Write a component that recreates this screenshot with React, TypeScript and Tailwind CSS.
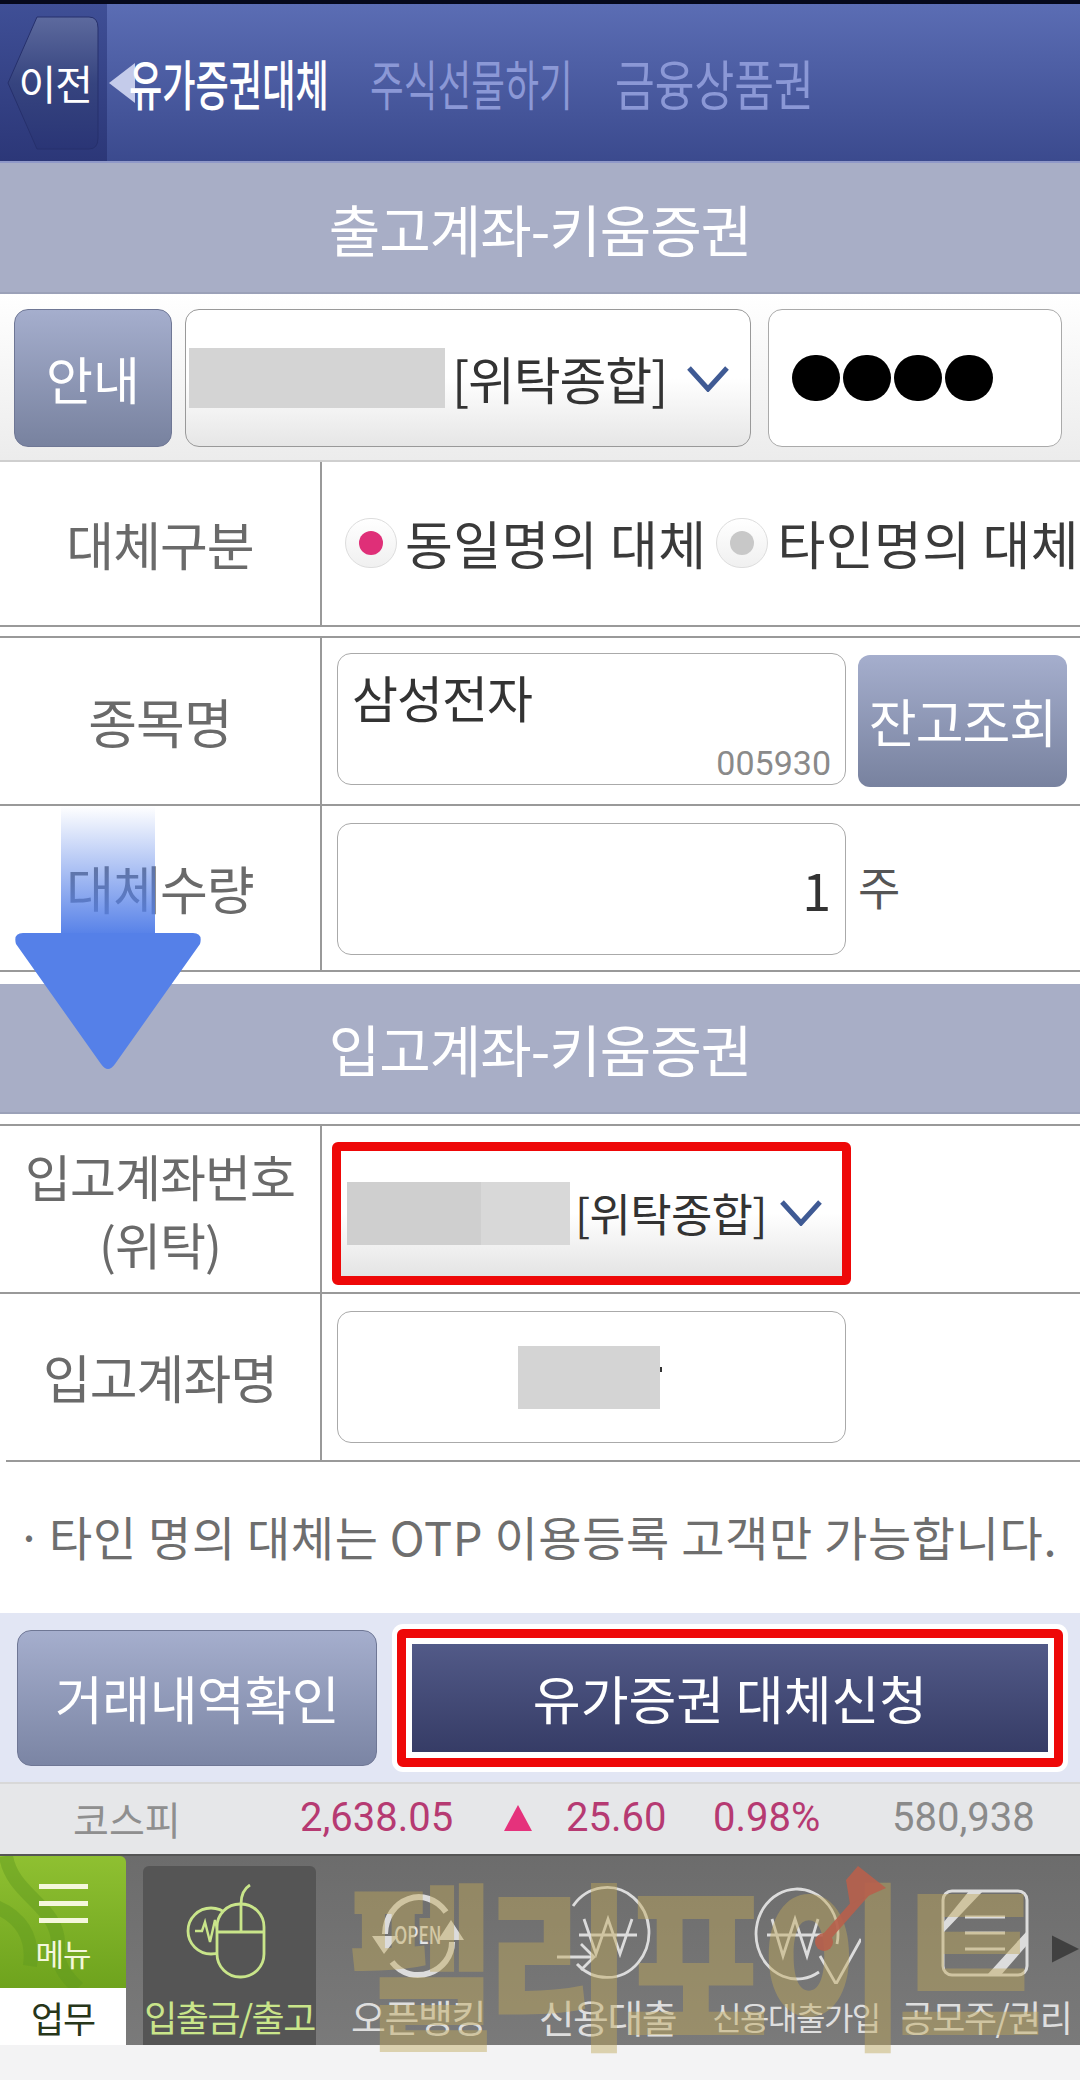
const font = { fontFamily: '"Noto Sans CJK KR", "Noto Sans", sans-serif' };

function Chevron({ className }: { className: string }) {
  return (
    <svg viewBox="0 0 42 26" className={className} fill="none" stroke="#3f5a94" strokeWidth="5">
      <path d="M2 2 L21 23 L40 2" />
    </svg>
  );
}

function Radio({ on }: { on: boolean }) {
  return (
    <span className="flex h-[50px] w-[52px] shrink-0 items-center justify-center rounded-full border border-[#ddd] bg-gradient-to-b from-[#ffffff] to-[#f0f0f0]">
      <span className={on ? "h-[24px] w-[24px] rounded-full bg-[#df2f78]" : "h-[24px] w-[24px] rounded-full bg-[#c8c8c8]"} />
    </span>
  );
}

function Label({ children, size }: { children: React.ReactNode; size: string }) {
  return (
    <div className={`flex w-[322px] shrink-0 flex-col items-center justify-center border-r-2 border-[#999] text-center ${size} leading-[68px] tracking-[-1px] text-[#6a6a6a]`}>
      {children}
    </div>
  );
}

function Section({ title, h }: { title: string; h: string }) {
  return (
    <div className={`flex ${h} items-center justify-center border-b-2 border-[#9ba1b8] bg-[#a8aec6] text-[56px] tracking-[-1px] text-white`}>
      {title}
    </div>
  );
}

function MouseIcon() {
  return (
    <svg viewBox="0 0 90 100" className="h-[100px] w-[90px]" fill="none" stroke="#c9e58a" strokeWidth="2.8">
      <circle cx="26" cy="47" r="23" />
      <path d="M10 47 L17 47 L20 38 L25 58 L30 36 L35 58 L39 38 L42 47" strokeWidth="2.4" />
      <rect x="32" y="20" width="47" height="73" rx="23" fill="#555" />
      <path d="M32 48 H79 M56 20 V48 M56 20 C56 10 60 4 65 1" />
    </svg>
  );
}

function OpenIcon() {
  return (
    <div className="relative flex h-[100px] w-[100px] items-center justify-center">
      <svg viewBox="0 0 100 100" className="absolute inset-0 h-full w-full" fill="none" stroke="#dcdcdc" strokeWidth="6">
        <path d="M17 50 C18 14 58 0 78 28" />
        <path d="M84 58 C84 88 44 104 24 78" />
        <path d="M4 52 L30 52 L16 70 Z M70 56 L96 56 L83 36 Z" fill="#dcdcdc" stroke="none" />
      </svg>
      <span className="relative inline-block scale-x-[0.72] text-[24px] font-medium leading-none text-[#e4e4e4]">OPEN</span>
    </div>
  );
}

function WonCircle() {
  return (
    <svg viewBox="0 0 110 100" className="h-[100px] w-[110px]" fill="none" stroke="#dcdcdc" strokeWidth="2.8">
      <path d="M20 22 A42 45 0 1 1 24 80" />
      <path d="M31 35 L43 70 L55 35 L67 70 L79 35 M26 51 H84" />
      <path d="M4 73 H40 M28 60 L41 73 L28 86" />
    </svg>
  );
}

function WonCheck() {
  return (
    <svg viewBox="0 0 130 100" className="h-[100px] w-[130px]" fill="none" stroke="#dcdcdc" strokeWidth="2.8">
      <path d="M88 88 A41 45 0 1 1 106 60" />
      <path d="M41 35 L52 72 L64 35 L76 72 L87 35 M36 51 H92" />
      <path d="M89 72 L105 100 L130 55" />
    </svg>
  );
}

function SheetIcon() {
  return (
    <svg viewBox="0 0 90 90" className="h-[90px] w-[90px]" fill="none" stroke="#dcdcdc" strokeWidth="3">
      <rect x="2" y="2" width="84" height="84" rx="9" />
      <path d="M2 34 L28 2 L42 2 L2 44 Z M86 56 L86 42 L46 86 L60 86 Z" fill="#dcdcdc" stroke="none" />
      <path d="M24 28 H64 M24 44 H64 M24 60 H64" />
    </svg>
  );
}

function NavItem({ label, w, size, active, children }: { label: string; w: string; size: string; active?: boolean; children: React.ReactNode }) {
  return (
    <div className={`flex h-[179px] ${w} shrink-0 flex-col items-center justify-between pb-[5px] pt-[12px] ${active ? "rounded-t-[6px] bg-[#555555] text-[#c9e58a]" : "text-[#dedede]"}`}>
      <div className="flex h-[112px] items-center justify-center">{children}</div>
      <span className={`whitespace-nowrap ${size} leading-[48px] tracking-[-1.5px]`}>{label}</span>
    </div>
  );
}

export default function App() {
  return (
    <div className="relative h-[2080px] w-[1080px] overflow-hidden bg-white" style={font}>
      <div className="h-[4px] bg-[#06091c]" />
      {/* Header */}
      <div className="flex h-[159px] border-b-2 border-[#8f98c8] bg-gradient-to-b from-[#5b6db4] to-[#3b4a8e]">
        <div className="flex w-[107px] shrink-0 items-center justify-end bg-gradient-to-b from-[#3f4f96] to-[#2c3778] pr-[8px]">
          <div className="relative flex h-[134px] w-[92px] items-center justify-end pr-[7px]">
            <svg viewBox="0 0 92 134" preserveAspectRatio="none" className="absolute inset-0 h-full w-full" fill="none">
              <defs>
                <linearGradient id="bk" x1="0" y1="0" x2="0" y2="1">
                  <stop offset="0" stopColor="#5d6a9e" />
                  <stop offset="0.5" stopColor="#36447f" />
                  <stop offset="1" stopColor="#2a3576" />
                </linearGradient>
              </defs>
              <path d="M30 1 H82 Q91 1 91 12 V122 Q91 133 82 133 H30 L1 67 Z" fill="url(#bk)" stroke="#26306c" />
            </svg>
            <span className="relative text-[41px] tracking-[-1px] text-white">이전</span>
          </div>
        </div>
        <div className="relative flex items-center whitespace-nowrap text-[54px]">
          <svg viewBox="0 0 30 46" className="absolute left-[2px] top-[59px] h-[40px] w-[26px]">
            <path d="M30 0 V46 L0 23 Z" fill="#c4cbea" />
          </svg>
          <span className="relative ml-[22px] inline-block w-[200px] origin-left scale-x-[0.67] font-medium text-white">유가증권대체</span>
          <span className="ml-[41px] inline-block w-[203px] origin-left scale-x-[0.68] text-[#8b98d6]">주식선물하기</span>
          <span className="ml-[42px] inline-block w-[198px] origin-left scale-x-[0.8] text-[#8b98d6]">금융상품권</span>
        </div>
      </div>

      <Section title="출고계좌-키움증권" h="h-[131px]" />

      {/* Account row */}
      <div className="flex h-[168px] items-start gap-[13px] border-b-2 border-[#cfcfcf] bg-gradient-to-b from-[#ffffff] to-[#ececec] pl-[14px] pt-[15px]">
        <div className="flex h-[138px] w-[158px] items-center justify-center rounded-[14px] border border-[#6f7795] bg-gradient-to-b from-[#a5aecd] to-[#78829f] text-[51px] text-white">
          안내
        </div>
        <div className="flex h-[138px] w-[566px] items-center rounded-[14px] border border-[#999] bg-gradient-to-b from-[#ffffff] via-[#ffffff] to-[#e6e6e6] pl-[3px]">
          <div className="h-[60px] w-[256px] bg-[#d4d4d4]" />
          <span className="ml-[7px] whitespace-nowrap text-[51px] tracking-[-1.2px] text-[#333]">[위탁종합]</span>
          <Chevron className="ml-[20px] mt-[2px] h-[26px] w-[42px] shrink-0" />
        </div>
        <div className="ml-[4px] flex h-[138px] w-[294px] items-center rounded-[14px] border border-[#aaa] bg-white pl-[23px]">
          <span className="h-[46px] w-[48px] rounded-full bg-black" />
          <span className="ml-[3px] h-[46px] w-[48px] rounded-full bg-black" />
          <span className="ml-[3px] h-[46px] w-[48px] rounded-full bg-black" />
          <span className="ml-[3px] h-[46px] w-[48px] rounded-full bg-black" />
        </div>
      </div>

      {/* 대체구분 */}
      <div className="flex h-[165px] border-b-2 border-[#999]">
        <Label size="text-[52px]">대체구분</Label>
        <div className="flex flex-1 items-center overflow-hidden whitespace-nowrap pb-[2px] pl-[23px] text-[52px] tracking-[0.4px] text-[#3a3a3a]">
          <Radio on />
          <span className="ml-[8px]">동일명의 대체</span>
          <span className="ml-[9px]"><Radio on={false} /></span>
          <span className="ml-[10px]">타인명의 대체</span>
        </div>
      </div>
      <div className="h-[9px]" />

      {/* 종목명 */}
      <div className="flex h-[170px] border-y-2 border-[#999]">
        <Label size="text-[53px]">종목명</Label>
        <div className="flex flex-1 items-start pl-[15px] pt-[15px]">
          <div className="flex h-[132px] w-[509px] flex-col justify-between rounded-[14px] border border-[#aaa] bg-white pb-[2px] pl-[14px] pr-[14px] pt-[11px]">
            <span className="text-[50px] leading-[62px] tracking-[-1px] text-[#333]">삼성전자</span>
            <span className="text-right text-[34px] leading-[38px] text-[#8a8a8a]" style={{ fontFamily: "Roboto, sans-serif" }}>005930</span>
          </div>
          <div className="ml-[12px] mt-[2px] flex h-[132px] w-[209px] items-center justify-center rounded-[12px] bg-gradient-to-b from-[#a5aecd] to-[#78829f] text-[52px] tracking-[-1px] text-white">
            잔고조회
          </div>
        </div>
      </div>

      {/* 대체수량 */}
      <div className="flex h-[166px] border-b-2 border-[#999]">
        <Label size="text-[52px]">대체수량</Label>
        <div className="flex flex-1 items-center pl-[15px] pt-[1px]">
          <div className="flex h-[132px] w-[509px] items-center justify-end rounded-[14px] border border-[#aaa] bg-white pr-[14px] text-[52px] text-[#333]">
            1
          </div>
          <span className="ml-[12px] mb-[6px] text-[46px] text-[#555]">주</span>
        </div>
      </div>
      <div className="h-[12px]" />

      <Section title="입고계좌-키움증권" h="h-[130px]" />
      <div className="h-[10px]" />

      {/* 입고계좌번호 */}
      <div className="flex h-[170px] border-y-2 border-[#999]">
        <Label size="text-[50px]">
          <span>입고계좌번호</span>
          <span>(위탁)</span>
        </Label>
        <div className="flex flex-1 items-center pl-[10px] pt-[8px]">
          <div className="flex h-[143px] w-[519px] items-center rounded-[6px] border-[9px] border-[#ee0808] bg-gradient-to-b from-[#ffffff] via-[#ffffff] to-[#e4e4e4] pl-[6px]">
            <div className="h-[63px] w-[134px] bg-[#cfcfcf]" />
            <div className="h-[63px] w-[89px] bg-[#d8d8d8]" />
            <span className="ml-[5px] whitespace-nowrap text-[45px] tracking-[-0.7px] text-[#333]">[위탁종합]</span>
            <Chevron className="ml-[13px] h-[26px] w-[42px] shrink-0" />
          </div>
        </div>
      </div>

      {/* 입고계좌명 */}
      <div className="flex h-[166px]">
        <Label size="text-[52px]">입고계좌명</Label>
        <div className="flex flex-1 items-center pl-[15px]">
          <div className="flex h-[132px] w-[509px] items-center rounded-[14px] border border-[#aaa] bg-white pl-[180px]">
            <div className="h-[63px] w-[142px] bg-[#d4d4d4]" />
            <span className="mb-[16px] h-[5px] w-[2px] bg-[#333]" />
          </div>
        </div>
      </div>
      <div className="ml-[6px] h-[2px] bg-[#999]" />

      {/* Note */}
      <div className="flex h-[151px] items-center whitespace-nowrap pb-[2px] pl-[16px] text-[47px] tracking-[0.65px] text-[#6e6e6e]">
        <span>·</span>
        <span className="ml-[6px]">타인 명의 대체는 OTP 이용등록 고객만 가능합니다.</span>
      </div>

      {/* Buttons */}
      <div className="flex h-[169px] items-center gap-[20px] bg-[#e2e6f4] pl-[17px]">
        <div className="flex h-[136px] w-[360px] items-center justify-center rounded-[14px] border border-[#6f7795] bg-gradient-to-b from-[#a5aecd] to-[#7b85a4] text-[52px] tracking-[-0.5px] text-white">
          거래내역확인
        </div>
        <div className="flex h-[138px] w-[666px] rounded-[6px] border-[9px] border-[#ee0808] bg-white p-[6px] shadow-[0_0_0_5px_#ffffff]">
          <div className="flex flex-1 items-center justify-center bg-gradient-to-b from-[#525a88] to-[#363c66] text-[52px] text-white">
            유가증권 대체신청
          </div>
        </div>
      </div>

      {/* Ticker */}
      <div className="flex h-[72px] items-center border-t-2 border-[#d8d8d8] bg-[#e6e7e9] pb-[2px] text-[40px]" style={{ fontFamily: 'Roboto, "Noto Sans CJK KR", sans-serif' }}>
        <span className="ml-[73px] w-[227px] text-[39px] text-[#8f8f8f]" style={font}>코스피</span>
        <span className="w-[204px] text-[#b63a72]">2,638.05</span>
        <svg viewBox="0 0 28 26" className="h-[26px] w-[28px]"><path d="M14 0 L28 26 H0 Z" fill="#e5327c" /></svg>
        <span className="ml-[34px] w-[147px] text-[#b63a72]">25.60</span>
        <span className="w-[179px] text-[#b63a72]">0.98%</span>
        <span className="text-[#8a8a8a]">580,938</span>
      </div>

      {/* Nav */}
      <div className="flex h-[191px] border-t-2 border-[#555] bg-gradient-to-b from-[#6c6c6c] to-[#7a7a7a]">
        <div className="flex w-[126px] shrink-0 flex-col">
          <div className="relative flex h-[132px] flex-col items-center justify-center overflow-hidden rounded-tr-[6px] bg-gradient-to-b from-[#8fc031] to-[#6ea31d] pt-[10px] text-[#f4f7dc]">
            <svg viewBox="0 0 126 132" className="absolute inset-0 h-full w-full" fill="none" stroke="#5f9a1f" strokeOpacity="0.45" strokeWidth="14">
              <path d="M6 0 C12 40 60 50 58 90 C56 112 70 124 78 132" />
              <path d="M-6 50 C20 60 34 80 30 110" />
            </svg>
            <span className="relative h-[5px] w-[49px] bg-[#f4f7dc]" />
            <span className="relative mt-[12px] h-[5px] w-[49px] bg-[#f4f7dc]" />
            <span className="relative mt-[12px] h-[5px] w-[49px] bg-[#f4f7dc]" />
            <span className="relative mt-[12px] text-[31px] leading-[36px] tracking-[-1px]">메뉴</span>
          </div>
          <div className="flex flex-1 items-center justify-center bg-white text-[36px] tracking-[-1px] text-[#27361a]">업무</div>
        </div>
        <div className="flex flex-1 items-end pl-[17px]">
          <NavItem label="입출금/출고" w="w-[173px]" size="text-[36px]" active><MouseIcon /></NavItem>
          <NavItem label="오픈뱅킹" w="w-[204px]" size="text-[38px]"><OpenIcon /></NavItem>
          <NavItem label="신용대출" w="w-[175px]" size="text-[39px]"><WonCircle /></NavItem>
          <NavItem label="신용대출가입" w="w-[202px]" size="text-[32px]"><WonCheck /></NavItem>
          <NavItem label="공모주/권리" w="w-[178px]" size="text-[36px]"><SheetIcon /></NavItem>
        </div>
      </div>
      <div className="h-[35px] bg-[#f3f3f4]" />

      {/* Overlays */}
      <svg viewBox="0 0 186 265" className="absolute left-[15px] top-[806px] h-[265px] w-[186px]">
        <defs>
          <linearGradient id="sh" x1="0" y1="0" x2="0" y2="1">
            <stop offset="0" stopColor="#5580e8" stopOpacity="0" />
            <stop offset="1" stopColor="#5580e8" />
          </linearGradient>
        </defs>
        <rect x="46" y="0" width="94" height="130" fill="url(#sh)" />
        <path d="M8 127 H178 Q188 127 185 138 L100 258 Q93 268 86 258 L1 138 Q-2 127 8 127 Z" fill="#5580e8" />
      </svg>

      <svg viewBox="0 0 30 30" className="absolute left-[1052px] top-[1932px] h-[34px] w-[27px]">
        <path d="M0 0 L30 15 L0 30 Z" fill="#404040" />
      </svg>

      <div className="pointer-events-none absolute left-[348px] top-[1850px] flex origin-top scale-y-[1.12] whitespace-nowrap text-[160px] font-black leading-[190px] tracking-[-10px] text-[#c0a85a] opacity-45">
        펠리포이트
      </div>
      <svg viewBox="0 0 80 90" className="pointer-events-none absolute left-[810px] top-[1866px] h-[90px] w-[80px] opacity-90">
        <circle cx="14" cy="76" r="9" fill="#b8604c" />
        <path d="M12 76 L56 26" stroke="#b8604c" strokeWidth="9" />
        <path d="M48 0 L76 22 L40 38 L36 14 Z" fill="#b8604c" />
      </svg>
    </div>
  );
}
